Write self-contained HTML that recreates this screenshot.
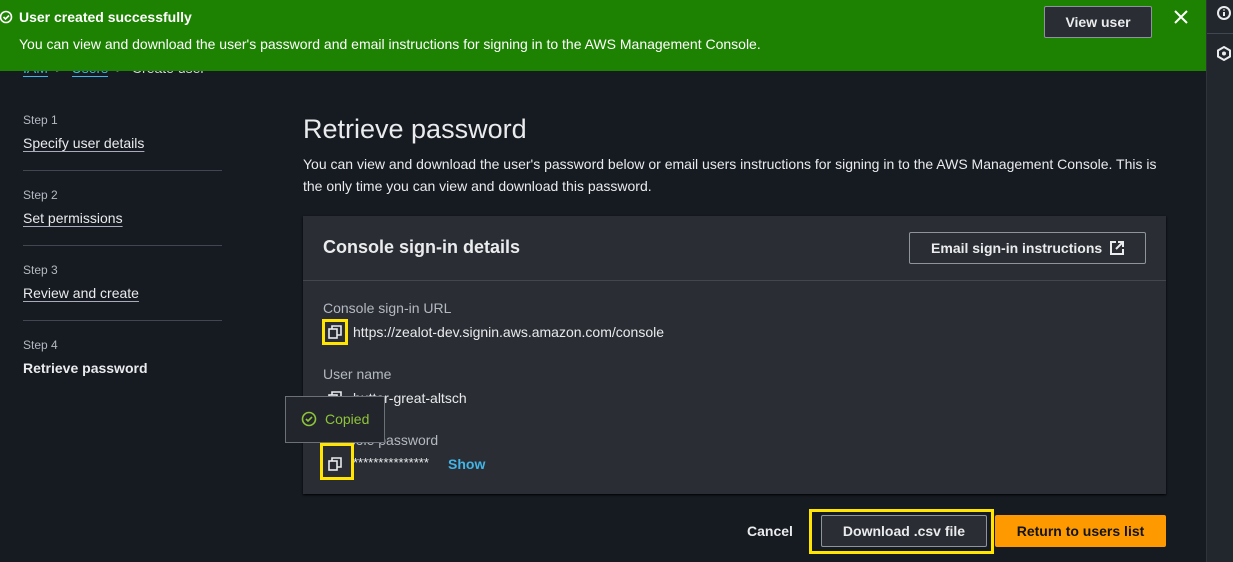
<!DOCTYPE html>
<html><head><meta charset="utf-8"><style>
*{margin:0;padding:0;box-sizing:border-box}
body{width:1233px;height:562px;overflow:hidden;background:#161a21;font-family:"Liberation Sans",sans-serif;color:#d1d5db;position:relative;font-size:14px}
.abs{position:absolute}
.banner{left:0;top:0;width:1206px;height:71px;background:#1d8102;color:#fff;z-index:2}
.side{left:1206px;top:0;width:27px;height:562px;background:#22262d;border-left:1px solid #2f333a}
.step{left:23px;font-size:12px;color:#b4b9c1}
.stl{left:23px;font-size:14px;color:#e9ebed;text-decoration:underline;text-underline-offset:3px;text-decoration-color:#aab}
.hr{left:23px;width:199px;height:1px;background:#414750}
.card{left:303px;top:216px;width:863px;height:278px;background:#2a2d33;box-shadow:0 1px 2px #000}
.lbl{font-size:14px;color:#b4b9c1;left:323px}
.val{font-size:14px;color:#e9ebed}
.btn{border:1px solid #8d949c;background:#2a2d33;color:#e9ebed;font-weight:bold;font-size:14px;display:flex;align-items:center;justify-content:center;border-radius:2px}
.ybox{border:3px solid #ffe500}
</style></head><body>
<div class="abs" style="left:23px;top:60px;font-size:14px;color:#42b4e6;white-space:nowrap"><span style="border-bottom:1px solid #42b4e6">IAM</span><span style="color:#8d949c">&nbsp;&nbsp;&gt;&nbsp;&nbsp;</span><span style="border-bottom:1px solid #42b4e6">Users</span><span style="color:#8d949c">&nbsp;&nbsp;&gt;&nbsp;&nbsp;</span><span style="color:#d1d5db">Create user</span></div>
<div class="abs banner">
 <svg class="abs" style="left:0;top:10px" width="14" height="14" viewBox="0 0 14 14"><circle cx="6" cy="7" r="5.5" fill="none" stroke="#fff" stroke-width="1.6"/><path d="M3.5 7l2 2 3.5-3.5" fill="none" stroke="#fff" stroke-width="1.6"/></svg>
 <div class="abs" style="left:19px;top:9px;font-weight:bold;font-size:14px">User created successfully</div>
 <div class="abs" style="left:19px;top:36px;font-size:14px">You can view and download the user's password and email instructions for signing in to the AWS Management Console.</div>
 <div class="abs btn" style="left:1044px;top:6px;width:108px;height:32px;background:#2a2d33;border-color:#8d949c">View user</div>
 <svg class="abs" style="left:1174px;top:10px" width="14" height="14"><path d="M1 1l12 12M13 1L1 13" stroke="#fff" stroke-width="2"/></svg>
</div>
<div class="abs side">
 <svg class="abs" style="left:10px;top:6px" width="14" height="14"><circle cx="7" cy="7" r="6" fill="none" stroke="#e9ebed" stroke-width="2"/><path d="M7 6v4M7 3.5v1" stroke="#e9ebed" stroke-width="2"/></svg>
 <div class="abs" style="left:0;top:33px;width:27px;height:1px;background:#414750"></div>
 <svg class="abs" style="left:10px;top:46px" width="14" height="15"><path d="M7 1l6 3.5v6L7 14 1 10.5v-6z" fill="none" stroke="#e9ebed" stroke-width="2"/><circle cx="7" cy="7.5" r="2" fill="#e9ebed"/></svg>
</div>
<div class="abs step" style="top:113px">Step 1</div>
<div class="abs stl" style="top:135px">Specify user details</div>
<div class="abs hr" style="top:170px"></div>
<div class="abs step" style="top:188px">Step 2</div>
<div class="abs stl" style="top:210px">Set permissions</div>
<div class="abs hr" style="top:245px"></div>
<div class="abs step" style="top:263px">Step 3</div>
<div class="abs stl" style="top:285px">Review and create</div>
<div class="abs hr" style="top:320px"></div>
<div class="abs step" style="top:338px">Step 4</div>
<div class="abs" style="left:23px;top:360px;font-weight:bold;color:#e9ebed">Retrieve password</div>

<div class="abs" style="left:303px;top:114px;font-size:27px;color:#e9ebed">Retrieve password</div>
<div class="abs" style="left:303px;top:153px;width:870px;line-height:22px;color:#e9ebed">You can view and download the user's password below or email users instructions for signing in to the AWS Management Console. This is the only time you can view and download this password.</div>

<div class="abs card">
 <div class="abs" style="left:20px;top:21px;font-size:18px;font-weight:bold;color:#e9ebed">Console sign-in details</div>
 <div class="abs btn" style="left:606px;top:16px;width:237px;height:32px;background:#2a2d33">Email sign-in instructions&nbsp;&nbsp;<svg width="14" height="14"><path d="M6 1H1v12h12V8M8 1h5v5M13 1L6 8" fill="none" stroke="#e9ebed" stroke-width="2"/></svg></div>
 <div class="abs" style="left:0;top:64px;width:863px;height:1px;background:#414750"></div>
</div>
<div class="abs lbl" style="top:300px">Console sign-in URL</div>
<div class="abs ybox" style="left:322px;top:319px;width:26px;height:26px"></div>
<svg class="abs" style="left:328px;top:325px" width="14" height="14"><rect x="1" y="4" width="8" height="9" fill="none" stroke="#e9ebed" stroke-width="1.6"/><path d="M4 4V1h9v9h-4" fill="none" stroke="#e9ebed" stroke-width="1.6"/></svg>
<div class="abs val" style="left:353px;top:324px">https://zealot-dev.signin.aws.amazon.com/console</div>
<div class="abs lbl" style="top:366px">User name</div>
<svg class="abs" style="left:328px;top:391px" width="14" height="14"><rect x="1" y="4" width="8" height="9" fill="none" stroke="#e9ebed" stroke-width="1.6"/><path d="M4 4V1h9v9h-4" fill="none" stroke="#e9ebed" stroke-width="1.6"/></svg>
<div class="abs val" style="left:353px;top:390px">butter-great-altsch</div>
<div class="abs lbl" style="top:432px">Console password</div>
<div class="abs ybox" style="left:320px;top:443px;width:34px;height:37px"></div>
<svg class="abs" style="left:328px;top:457px" width="14" height="14"><rect x="1" y="4" width="8" height="9" fill="none" stroke="#e9ebed" stroke-width="1.6"/><path d="M4 4V1h9v9h-4" fill="none" stroke="#e9ebed" stroke-width="1.6"/></svg>
<div class="abs val" style="left:353px;top:455px;font-size:13px">***************</div>
<div class="abs" style="left:448px;top:456px;color:#42b4e6;font-weight:bold">Show</div>
<div class="abs" style="left:285px;top:396px;width:100px;height:47px;background:#22252b;border:1px solid #6b7079"></div>
<svg class="abs" style="left:301px;top:411px" width="16" height="16"><circle cx="8" cy="8" r="6.5" fill="none" stroke="#8fc33a" stroke-width="1.6"/><path d="M5 8l2 2 4-4" fill="none" stroke="#8fc33a" stroke-width="1.6"/></svg>
<div class="abs" style="left:325px;top:411px;color:#8fc33a">Copied</div>

<div class="abs" style="left:747px;top:523px;font-weight:bold;color:#e9ebed">Cancel</div>
<div class="abs ybox" style="left:809px;top:509px;width:185px;height:45px"></div>
<div class="abs btn" style="left:821px;top:515px;width:166px;height:32px;background:#2a2d33">Download .csv file</div>
<div class="abs btn" style="left:995px;top:515px;width:171px;height:32px;background:#ff9900;border-color:#ff9900;color:#0f141a">Return to users list</div>
</body></html>
